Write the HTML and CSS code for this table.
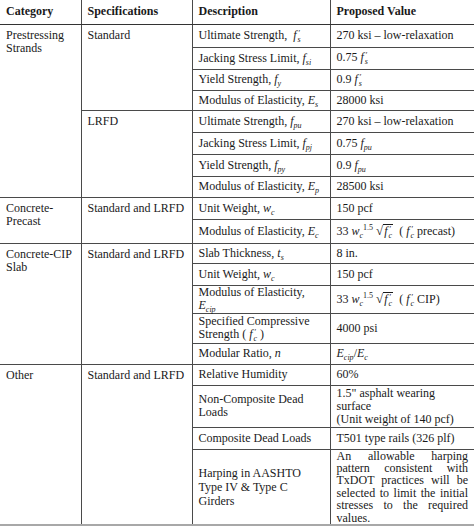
FILE: index.html
```html
<!DOCTYPE html>
<html>
<head>
<meta charset="utf-8">
<link rel="stylesheet" href="styles.css">
</head>
<body>
<table class="spec">
<colgroup><col class="w1"><col class="w2"><col class="w3"><col class="w4"></colgroup>
<thead>
<tr class="hd"><th class="c1">Category</th><th>Specifications</th><th>Description</th><th>Proposed Value</th></tr>
</thead>
<tbody>
<tr class="h23">
<td class="c1" rowspan="8">Prestressing Strands</td>
<td class="c2" rowspan="4">Standard</td>
<td>Ultimate Strength,&nbsp; <i>f</i><span class="ps"><i class="pr">′</i><i class="sb">s</i></span></td>
<td>270 ksi – low-relaxation</td>
</tr>
<tr class="h22"><td>Jacking Stress Limit, <i>f</i><sub>si</sub></td><td>0.75 <i>f</i><span class="ps"><i class="pr">′</i><i class="sb">s</i></span></td></tr>
<tr class="h21"><td>Yield Strength, <i>f</i><sub>y</sub></td><td>0.9 <i>f</i><span class="ps"><i class="pr">′</i><i class="sb">s</i></span></td></tr>
<tr class="h20"><td>Modulus of Elasticity, <i>E</i><sub>s</sub></td><td>28000 ksi</td></tr>
<tr class="h22">
<td class="c2" rowspan="4">LRFD</td>
<td>Ultimate Strength, <i>f</i><sub>pu</sub></td><td>270 ksi – low-relaxation</td>
</tr>
<tr class="h22"><td>Jacking Stress Limit, <i>f</i><sub>pj</sub></td><td>0.75 <i>f</i><sub>pu</sub></td></tr>
<tr class="h22"><td>Yield Strength, <i>f</i><sub>py</sub></td><td>0.9 <i>f</i><sub>pu</sub></td></tr>
<tr class="h21"><td>Modulus of Elasticity, <i>E</i><sub>p</sub></td><td>28500 ksi</td></tr>
<tr class="h22">
<td class="c1" rowspan="2">Concrete-Precast</td>
<td class="c2" rowspan="2">Standard and LRFD</td>
<td>Unit Weight, <i>w</i><sub>c</sub></td><td>150 pcf</td>
</tr>
<tr class="h24"><td>Modulus of Elasticity, <i>E</i><sub>c</sub></td><td>33 <i>w</i><sub>c</sub><sup>1.5</sup> <span class="rad">√</span><span class="rt"><i>f</i><span class="ps"><i class="pr">′</i><i class="sb">c</i></span></span>&nbsp; ( <i>f</i><span class="ps"><i class="pr">′</i><i class="sb">c</i></span> precast)</td></tr>
<tr class="h20">
<td class="c1" rowspan="5">Concrete-CIP Slab</td>
<td class="c2" rowspan="5">Standard and LRFD</td>
<td>Slab Thickness, <i>t</i><sub>s</sub></td><td>8 in.</td>
</tr>
<tr class="h22"><td>Unit Weight, <i>w</i><sub>c</sub></td><td>150 pcf</td></tr>
<tr class="h28 tight"><td>Modulus of Elasticity,<br><i>E</i><sub>cip</sub></td><td>33 <i>w</i><sub>c</sub><sup>1.5</sup> <span class="rad">√</span><span class="rt"><i>f</i><span class="ps"><i class="pr">′</i><i class="sb">c</i></span></span>&nbsp; ( <i>f</i><span class="ps"><i class="pr">′</i><i class="sb">c</i></span> CIP)</td></tr>
<tr class="h30 tight"><td>Specified Compressive Strength ( <i>f</i><span class="ps"><i class="pr">′</i><i class="sb">c</i></span> )</td><td>4000 psi</td></tr>
<tr class="h21"><td>Modular Ratio, <i>n</i></td><td><i>E</i><sub>cip</sub>/<i>E</i><sub>c</sub></td></tr>
<tr class="h21">
<td class="c1" rowspan="4">Other</td>
<td class="c2" rowspan="4">Standard and LRFD</td>
<td>Relative Humidity</td><td>60%</td>
</tr>
<tr class="h41"><td>Non-Composite Dead Loads</td><td>1.5" asphalt wearing<br>surface<br>(Unit weight of 140 pcf)</td></tr>
<tr class="h22"><td>Composite Dead Loads</td><td>T501 type rails (326 plf)</td></tr>
<tr class="h75"><td class="harp">Harping in AASHTO Type IV &amp; Type C Girders</td><td class="just">An allowable harping pattern consistent with TxDOT practices will be selected to limit the initial stresses to the required values.</td></tr>
</tbody>
</table>
</body>
</html>
```
FILE: styles.css
```css
html, body {
  margin: 0;
  padding: 0;
  background: #ffffff;
}

.spec {
  border-collapse: collapse;
  table-layout: fixed;
  width: 474px;
  font-family: "Liberation Serif", "Times New Roman", serif;
  font-size: 12px;
  line-height: 13px;
  color: #1a1a1a;
  border-bottom: 2px solid #a8a8a8;
}

.w1 { width: 81px; }
.w2 { width: 111px; }
.w3 { width: 138px; }
.w4 { width: 144px; }

.spec th,
.spec td {
  padding: 1px 6px;
  text-align: left;
  vertical-align: middle;
  border-top: 1px solid #4a4a4a;
  border-left: 1px solid #4a4a4a;
}

.spec th {
  font-weight: bold;
  border-top: none;
  border-bottom: 1px solid #333333;
}

.spec .c1 {
  border-left: none;
}

.spec td.c1,
.spec td.c2 {
  vertical-align: top;
  padding-top: 4px;
}

.spec td.c2 {
  white-space: nowrap;
}

.spec .tight td {
  padding-top: 0;
  padding-bottom: 0;
}

.spec td.harp {
  line-height: 14px;
}

.spec td.just {
  text-align: justify;
  line-height: 12.4px;
  padding-top: 0;
  padding-bottom: 0;
}

.hd { height: 24px; }
.h20 { height: 20px; }
.h21 { height: 21px; }
.h22 { height: 22px; }
.h23 { height: 23px; }
.h24 { height: 24px; }
.h28 { height: 28px; }
.h30 { height: 30px; }
.h41 { height: 41px; }
.h75 { height: 75px; }

.spec sub {
  font-size: 8px;
  line-height: 0;
  vertical-align: -3px;
  font-style: italic;
}

.spec sup {
  font-size: 8px;
  line-height: 0;
  vertical-align: 5px;
}

.ps {
  display: inline-block;
  vertical-align: -3px;
  font-size: 8px;
  line-height: 6px;
  margin-left: 1px;
}

.ps i {
  display: block;
}

.ps .pr {
  font-style: normal;
  margin-left: 1px;
}

.rad {
  font-size: 13px;
}

.rt {
  display: inline-block;
  border-top: 1px solid #1a1a1a;
  line-height: 12px;
  padding: 0 1px;
}
```
